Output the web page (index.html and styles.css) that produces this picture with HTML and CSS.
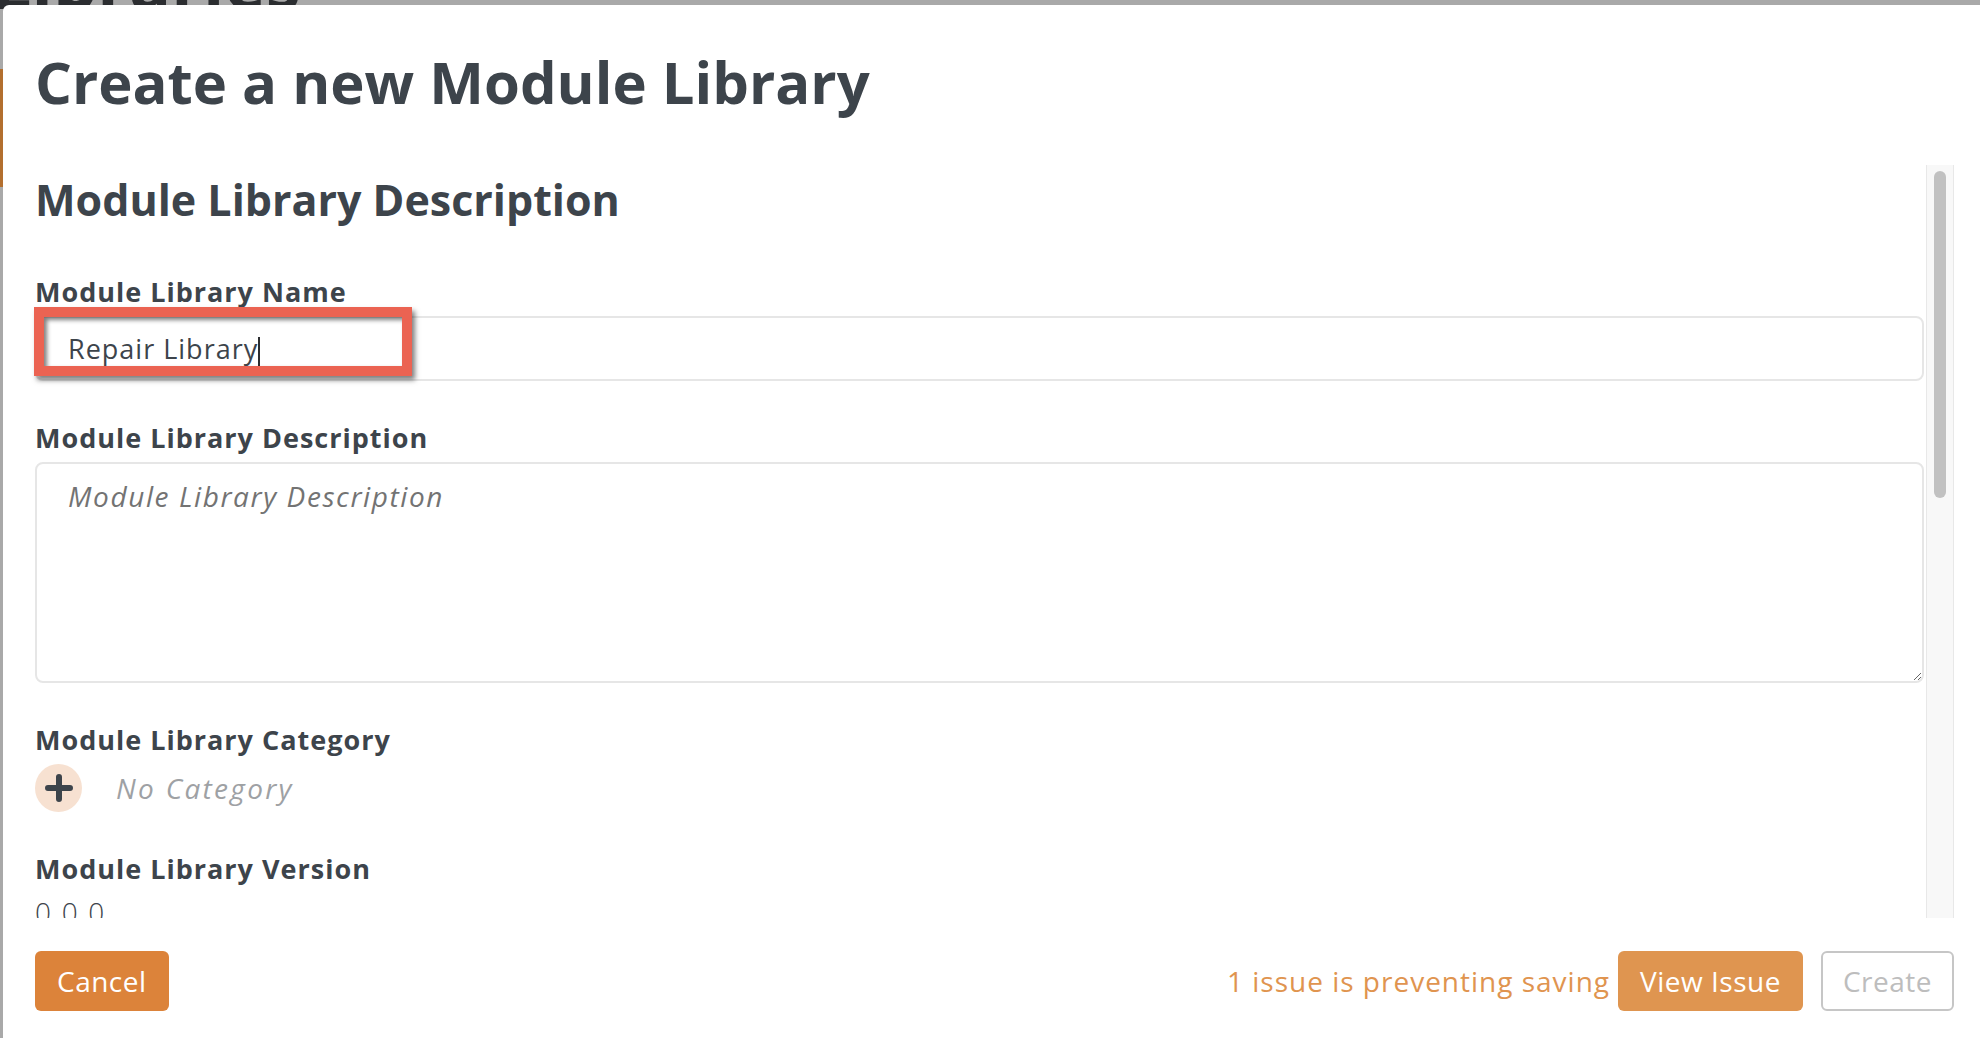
FILE: index.html
```html
<!DOCTYPE html>
<html lang="en">
<head>
  <meta charset="UTF-8">
  <meta name="viewport" content="width=device-width, initial-scale=1.0">
  <title>Create a new Module Library</title>
  <link rel="stylesheet" href="styles.css">
</head>
<body>
  <div class="page">
    <h1 class="page-title">Libraries</h1>
    <div class="page-side"></div>

    <!-- Modal dialog sits over the libraries page -->
    <div class="modal">
      <div class="modal-header">
        <h1 class="modal-title">Create a new Module Library</h1>
      </div>

      <div class="modal-content">
        <div class="modal-body">
          <h2 class="section-title">Module Library Description</h2>

          <div class="field">
            <label class="field-label">Module Library Name</label>
            <div class="name-wrap">
              <div class="text-input"><span>Repair Library</span><span class="caret"></span></div>
              <div class="highlight"></div> <!-- annotation box -->
            </div>
          </div>

          <div class="field">
            <label class="field-label" for="description">Module Library Description</label>
            <textarea id="description" placeholder="Module Library Description"></textarea>
          </div>

          <div class="field">
            <label class="field-label">Module Library Category</label>
            <div class="category-row">
              <button class="add-btn" type="button">
                <svg width="28" height="28" viewBox="0 0 28 28">
                  <path d="M14 3v22M3 14h22" stroke="#3d444b" stroke-width="6" stroke-linecap="round" fill="none"/>
                </svg>
              </button>
              <span class="no-category">No Category</span>
            </div>
          </div>

          <div class="field">
            <label class="field-label">Module Library Version</label>
            <div class="version-value">0.0.0</div>
          </div>
        </div>

        <!-- scrollbar of the form -->
        <div class="scrollbar">
          <div class="scrollbar-thumb"></div>
        </div>
      </div>

      <div class="modal-footer">
        <button class="btn btn-cancel" type="button">Cancel</button>
        <span class="issue-text">1 issue is preventing saving</span>
        <button class="btn btn-issue" type="button">View Issue</button>
        <button class="btn btn-create" type="button" disabled>Create</button>
      </div>
    </div>
  </div>
</body>
</html>
```

FILE: styles.css
```css
* {
  box-sizing: border-box;
}

html, body {
  height: 100%;
}

body {
  margin: 0;
  font-family: "Open Sans", Lato, sans-serif;
  background-color: #a9a9a9;
  color: #3d444b;
  overflow: hidden;
}

.page {
  position: relative;
  display: flow-root;
  height: 100%;
}

.page-title {
  margin: -60px 0 0 -8px;
  font-size: 70px;
  font-weight: 700;
  line-height: 1.2;
  color: #2b2d30;
}

.page-side {
  width: 12px;
  height: 118px;
  margin-top: 45px;
  background-color: #b36f2f;
}

/* Modal */
.modal {
  position: absolute;
  top: 5px;
  left: 3px;
  right: 0;
  bottom: 0;
  background-color: #ffffff;
  border-radius: 6px 0 0 0;
  display: flex;
  flex-direction: column;
}

.modal-header {
  height: 160px;
  padding: 42px 32px 0;
  flex-shrink: 0;
}

.modal-title {
  margin: 0;
  font-size: 58px;
  font-weight: 700;
  line-height: 1.2;
}

.modal-content {
  flex: 1;
  min-height: 0;
  display: flex;
  margin-right: 26px;
}

.modal-body {
  flex: 1;
  overflow: hidden;
  padding: 9px 2px 0 32px;
}

.scrollbar {
  width: 28px;
  padding: 6px 7px;
  background-color: #f8f8f8;
  border-left: 1px solid #e8e8e8;
  border-right: 1px solid #e8e8e8;
}

.scrollbar-thumb {
  height: 327px;
  border-radius: 8px;
  background-color: #c1c1c1;
}

.section-title {
  margin: 0 0 50px;
  font-size: 43px;
  font-weight: 700;
  line-height: 1.2;
}

.field {
  margin-bottom: 41px;
}

.field-label {
  display: block;
  margin-bottom: 9px;
  font-size: 27px;
  font-weight: 700;
  line-height: 31px;
  letter-spacing: 1px;
}

.name-wrap {
  position: relative;
}

.text-input {
  height: 65px;
  border: 2px solid #e6e6e6;
  border-radius: 8px;
  padding: 0 31px;
  display: flex;
  align-items: center;
  font-size: 27px;
  letter-spacing: 1px;
  color: #3d444b;
}

.caret {
  display: inline-block;
  width: 2px;
  height: 34px;
  margin-top: 12px;
  background-color: #2b2d30;
}

.highlight {
  position: absolute;
  left: -1px;
  top: -9px;
  width: 378px;
  height: 69px;
  border: 10px solid #eb6352;
  box-shadow: 3px 4px 5px rgba(0, 0, 0, 0.5), inset 3px 3px 4px rgba(0, 0, 0, 0.5);
}

textarea {
  display: block;
  width: 100%;
  height: 221px;
  border: 2px solid #e6e6e6;
  border-radius: 8px;
  padding: 13px 31px;
  font-family: inherit;
  font-size: 28px;
  letter-spacing: 1.6px;
  color: #3d444b;
  outline: none;
}

textarea::placeholder {
  font-style: italic;
  color: #737373;
}

.category-row {
  display: flex;
  align-items: center;
  gap: 34px;
}

.add-btn {
  width: 47px;
  height: 48px;
  padding: 0;
  border: none;
  border-radius: 50%;
  background-color: #f7e1d1;
  display: flex;
  align-items: center;
  justify-content: center;
}

.no-category {
  font-size: 28px;
  font-style: italic;
  letter-spacing: 2.3px;
  color: #9ea1a4;
}

.version-value {
  margin-top: 12px;
  font-size: 28px;
  font-weight: 300;
  line-height: 1.2;
  letter-spacing: 2px;
}

/* Footer */
.modal-footer {
  flex-shrink: 0;
  display: flex;
  align-items: center;
  padding: 33px 26px 27px 32px;
}

.btn {
  height: 60px;
  padding: 0 20px;
  border: 2px solid transparent;
  border-radius: 6px;
  font-family: inherit;
  font-size: 28px;
  letter-spacing: 0.5px;
  color: white;
  cursor: pointer;
}

.btn-cancel {
  background-color: #dc833a;
}

.issue-text {
  margin-left: auto;
  margin-right: 8px;
  font-size: 28px;
  letter-spacing: 1px;
  color: #e0944f;
}

.btn-issue {
  background-color: #df9550;
}

.btn-create {
  margin-left: 18px;
  background-color: #ffffff;
  border-color: #c6c6c6;
  color: #bdbdbd;
}
```
